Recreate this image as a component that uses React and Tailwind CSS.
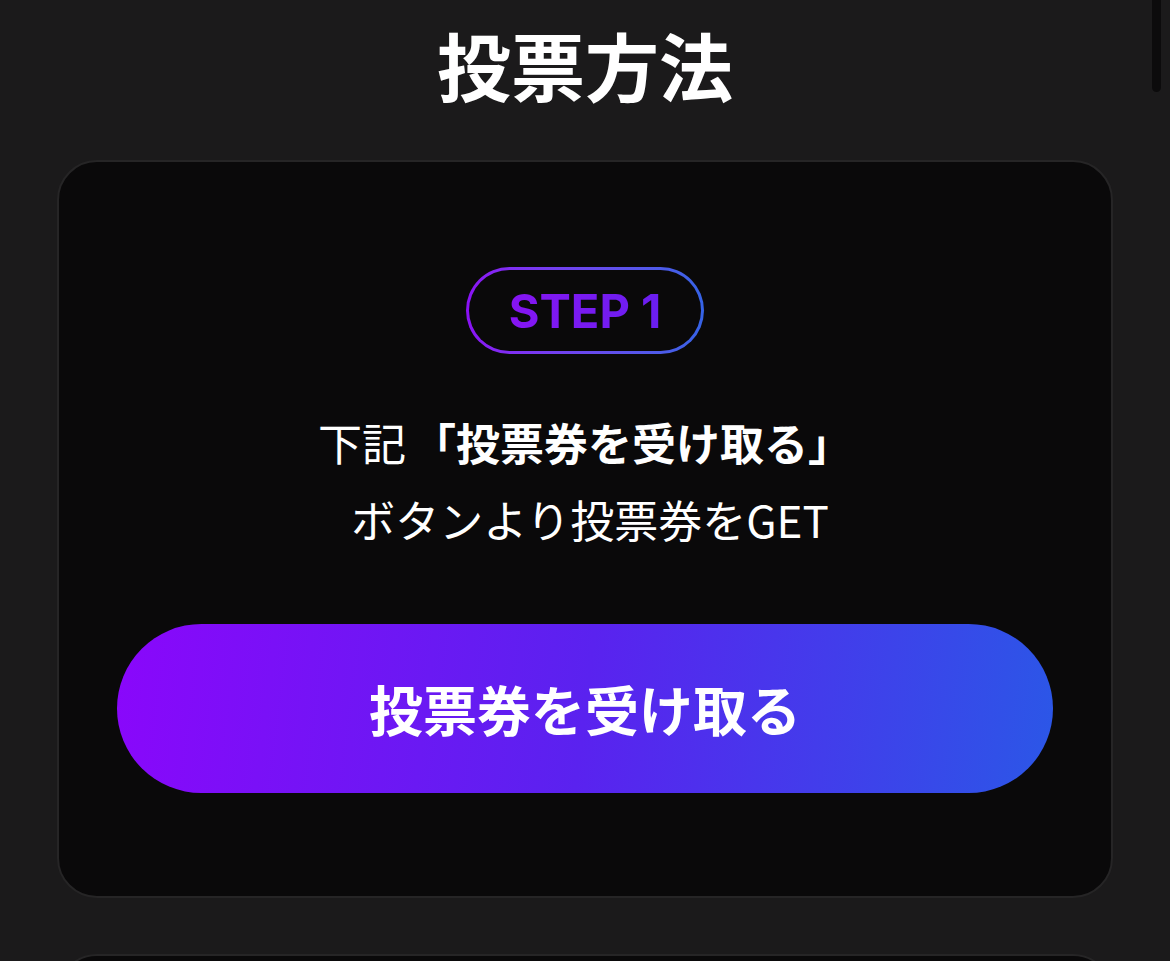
import React from 'react';

const jp = { fontFamily: '"Noto Sans CJK JP", "Noto Sans", sans-serif' };

function StepBadge({ label }) {
  return (
    <div className="rounded-full bg-gradient-to-r from-[#8a0ff5] to-[#3563e6] p-[3px]">
      <div className="flex h-[81px] w-[232px] items-center justify-center rounded-full bg-[#0a090a]">
        <span className="bg-gradient-to-r from-[#8614f2] to-[#6a1ef0] bg-clip-text text-[47px] font-bold leading-none text-transparent" style={{ fontFamily: 'Inter, "Noto Sans", sans-serif' }}>
          {label}
        </span>
      </div>
    </div>
  );
}

function StepCard() {
  return (
    <section className="flex h-[738px] flex-col items-center rounded-[40px] border-2 border-[#262526] bg-[#0a090a] px-[58px] pt-[105px]">
      <StepBadge label="STEP 1" />
      <div className="mt-[50px] flex flex-col items-center text-[44px] leading-[77px] text-white">
        <p>
          下記<span className="ml-[6px] font-bold">「投票券を受け取る」</span>
        </p>
        <p className="pl-[10px]">ボタンより投票券をGET</p>
      </div>
      <button className="mt-[66px] flex h-[169px] w-full items-center justify-center rounded-full bg-[linear-gradient(97deg,#8a07fb_0%,#5a22ef_50%,#2b57e7_100%)] text-[54px] font-bold text-white">
        投票券を受け取る
      </button>
    </section>
  );
}

export default function App() {
  return (
    <div className="relative h-[961px] overflow-hidden bg-[#1b1a1b]" style={jp}>
      <div className="px-[57px]">
        <h1 className="flex h-[160px] items-start justify-center pt-[20px] text-[74px] font-bold leading-[1.2] text-white">
          投票方法
        </h1>
        <StepCard />
        <div className="mt-[56px] h-[200px] rounded-[40px] border-2 border-[#262526] bg-[#0a090a]" />
      </div>
      {/* scroll thumb */}
      <div className="absolute right-[9px] top-0 h-[92px] w-[9px] rounded-b-full bg-[#0c0b0c]" />
    </div>
  );
}
